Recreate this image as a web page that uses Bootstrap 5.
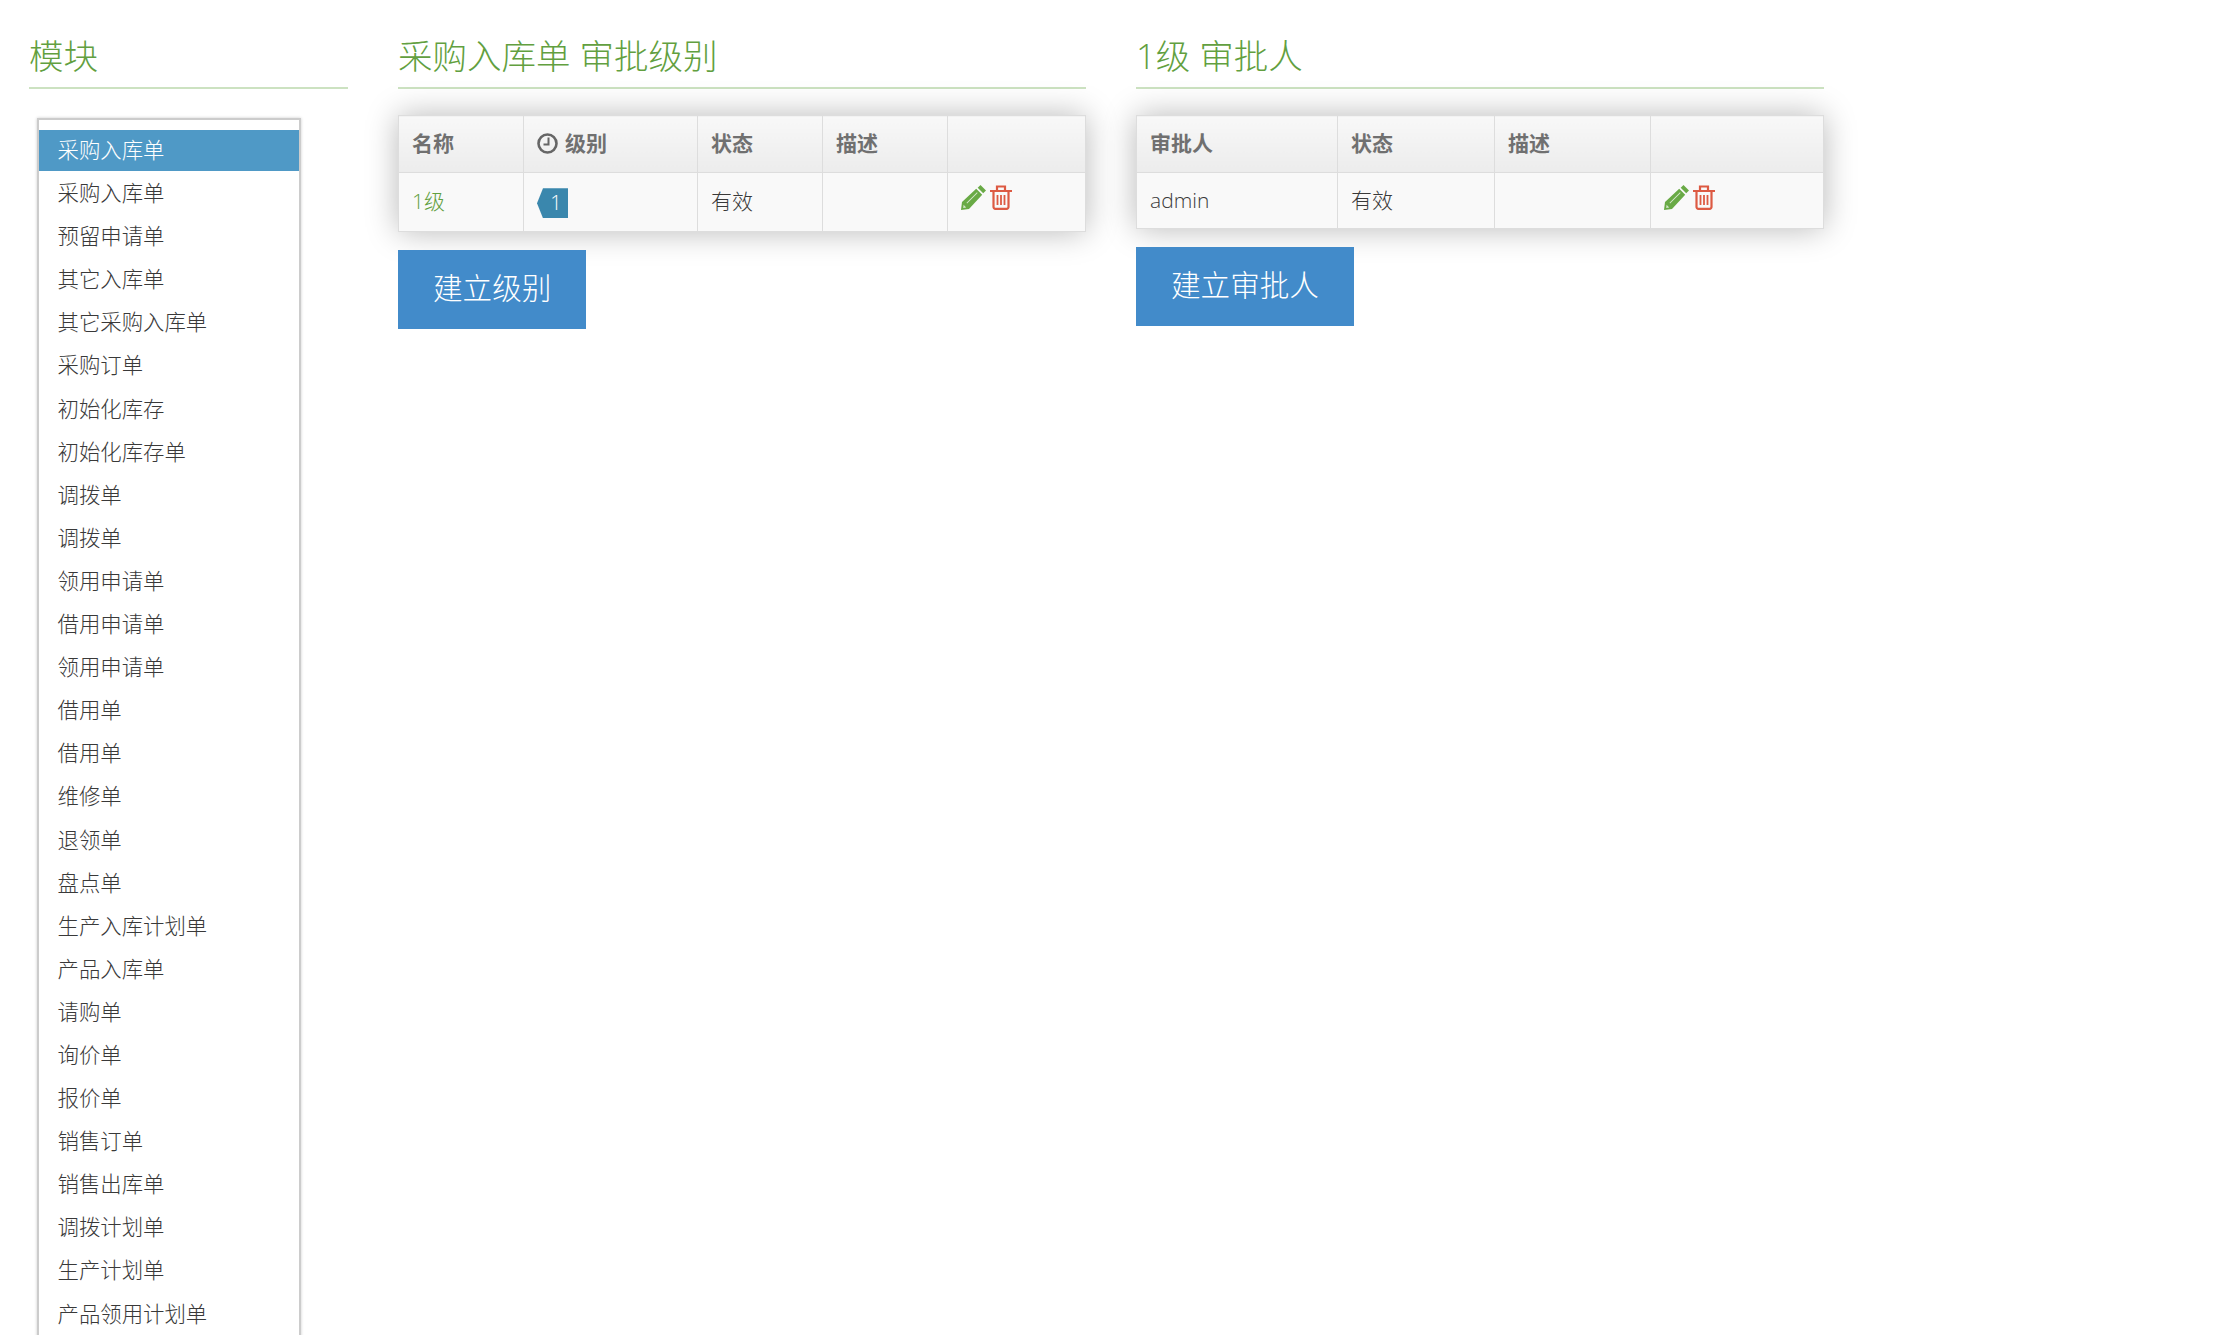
<!DOCTYPE html>
<html lang="zh-CN">
<head>
  <meta charset="UTF-8" />
  <title>审批级别</title>
  <link href="https://cdn.jsdelivr.net/npm/bootstrap@5.3.0/dist/css/bootstrap.min.css" rel="stylesheet" />
  <style>
    html, body { height: 100%; overflow: hidden; }
    body { font-family: "Open Sans", "Noto Sans CJK SC", sans-serif; font-weight: 300; color: #393939; background: #fff; }
    .page-wrap { gap: 50px; padding-left: 29px; }
    .col-modules { width: 319px; }
    .col-levels, .col-people { width: 688px; }
    .sec-title {
      height: 89px;
      margin: 0;
      padding-top: 33px;
      font-family: "Open Sans", "Noto Sans CJK SC", sans-serif;
      font-size: 34.5px;
      line-height: 46px;
      font-weight: 300;
      color: #629f40;
      border-bottom: 2px solid #cce2c1;
    }
    .module-box {
      width: 264px;
      margin: 29px 0 0 8px;
      padding: 10px 0 30px;
      border: 2px solid #ccc;
      border-radius: 0;
      box-shadow: 0 0 3px rgba(0, 0, 0, .2);
    }
    .module-box .list-group-item {
      height: 41px;
      margin-bottom: 2.1px;
      padding: 0 0 0 18.5px;
      border: 0;
      border-radius: 0;
      font-size: 21.4px;
      line-height: 39px;
      color: #393939;
    }
    .module-box .list-group-item.active { background: #4f99c6; color: #fff; }
    .grid-wrap { margin-top: 26px; box-shadow: 0 0 30px rgba(0, 0, 0, .28); }
    .grid-tbl { table-layout: fixed; margin: 0; font-size: 21px; }
    .grid-tbl > :not(caption) > * > * {
      padding: 0 13px;
      border: 1px solid #ddd;
      vertical-align: middle;
      color: #393939;
      background: #f9f9f9;
      box-shadow: none;
    }
    .grid-tbl thead th {
      height: 57px;
      font-weight: 700;
      color: #707070;
      background: linear-gradient(to bottom, #f8f8f8, #ececec);
    }
    .grid-tbl tbody td { height: 56px; }
    .grid-tbl .level-row td { height: 59px; }
    .w-name { width: 125px; }
    .w-mid { width: 174px; }
    .w-std { width: 125px; }
    .w-who { width: 201px; }
    .w-flag { width: 157px; }
    .w-note { width: 156px; }
    .grid-tbl .level-link { color: #629f40; text-decoration: none; }
    .clock-icon { width: 21px; height: 21px; margin-right: 7px; vertical-align: -3px; }
    .level-tag {
      display: inline-block;
      width: 31px;
      height: 30px;
      padding-left: 7px;
      font-size: 20px;
      line-height: 30px;
      text-align: center;
      color: #fff;
      background: #3a87ad;
      clip-path: polygon(6px 0, 100% 0, 100% 100%, 6px 100%, 0 50%);
      vertical-align: middle;
    }
    .row-actions { gap: 4px; margin-top: -6px; }
    .level-row .row-actions { margin-top: -9px; }
    .act-icon { display: block; height: 25px; }
    .act-pencil { width: 25px; }
    .act-trash { width: 22px; }
    .make-btn {
      margin-top: 18px;
      height: 79px;
      padding: 0 35px 3px;
      border: 0;
      border-radius: 0;
      font-size: 29.6px;
      font-weight: 300;
      color: #fff;
      background: #428bca;
    }
    .make-btn:hover { color: #fff; background: #428bca; }
  </style>
</head>
<body>
  <div class="d-flex align-items-start page-wrap">
    <div class="col-modules">
      <h4 class="sec-title">模块</h4>
      <div class="list-group module-box">
        <a class="list-group-item active">采购入库单</a>
        <a class="list-group-item">采购入库单</a>
        <a class="list-group-item">预留申请单</a>
        <a class="list-group-item">其它入库单</a>
        <a class="list-group-item">其它采购入库单</a>
        <a class="list-group-item">采购订单</a>
        <a class="list-group-item">初始化库存</a>
        <a class="list-group-item">初始化库存单</a>
        <a class="list-group-item">调拨单</a>
        <a class="list-group-item">调拨单</a>
        <a class="list-group-item">领用申请单</a>
        <a class="list-group-item">借用申请单</a>
        <a class="list-group-item">领用申请单</a>
        <a class="list-group-item">借用单</a>
        <a class="list-group-item">借用单</a>
        <a class="list-group-item">维修单</a>
        <a class="list-group-item">退领单</a>
        <a class="list-group-item">盘点单</a>
        <a class="list-group-item">生产入库计划单</a>
        <a class="list-group-item">产品入库单</a>
        <a class="list-group-item">请购单</a>
        <a class="list-group-item">询价单</a>
        <a class="list-group-item">报价单</a>
        <a class="list-group-item">销售订单</a>
        <a class="list-group-item">销售出库单</a>
        <a class="list-group-item">调拨计划单</a>
        <a class="list-group-item">生产计划单</a>
        <a class="list-group-item">产品领用计划单</a>
      </div>
    </div>

    <div class="col-levels">
      <h4 class="sec-title">采购入库单 审批级别</h4>
      <div class="grid-wrap">
        <table class="table table-bordered grid-tbl">
          <thead>
            <tr>
              <th class="w-name">名称</th>
              <th class="w-mid">
                <svg class="clock-icon" viewBox="0 0 21 21"><circle cx="10.5" cy="10.5" r="9" fill="none" stroke="#666" stroke-width="2.6"/><path d="M11.5 4.5v7H6.5" fill="none" stroke="#666" stroke-width="2"/></svg>级别
              </th>
              <th class="w-std">状态</th>
              <th class="w-std">描述</th>
              <th></th>
            </tr>
          </thead>
          <tbody>
            <tr class="level-row">
              <td><a class="level-link" href="#">1级</a></td>
              <td><span class="level-tag">1</span></td>
              <td>有效</td>
              <td></td>
              <td>
                <div class="d-flex row-actions">
                  <svg class="act-icon act-pencil" viewBox="0 0 25 25"><path fill="#69aa46" d="M19.500 0L25 5.500l-2.800 2.800-5.500-5.500zM15.200 3.800l6 6L8 24 0 25l1-8z"/><path fill="#d6e8cc" d="M2.600 19.800l2.600 2.600-3 .5zM5.500 17.800l10.500-10.500.6.600-10.500 10.500z"/></svg>
                  <svg class="act-icon act-trash" viewBox="0 0 22 25"><path fill="none" stroke="#dd5a43" stroke-width="2.2" d="M0 6h22M7 6V1.500h8V6M3.500 6v16a1.800 1.800 0 0 0 1.800 1.800h11.400a1.800 1.800 0 0 0 1.800-1.800V6"/><path fill="none" stroke="#dd5a43" stroke-width="1.800" d="M7.500 10v10M11 10v10M14.500 10v10"/></svg>
                </div>
              </td>
            </tr>
          </tbody>
        </table>
      </div>
      <button type="button" class="btn make-btn">建立级别</button>
    </div>

    <div class="col-people">
      <h4 class="sec-title">1级 审批人</h4>
      <div class="grid-wrap">
        <table class="table table-bordered grid-tbl">
          <thead>
            <tr>
              <th class="w-who">审批人</th>
              <th class="w-flag">状态</th>
              <th class="w-note">描述</th>
              <th></th>
            </tr>
          </thead>
          <tbody>
            <tr>
              <td>admin</td>
              <td>有效</td>
              <td></td>
              <td>
                <div class="d-flex row-actions">
                  <svg class="act-icon act-pencil" viewBox="0 0 25 25"><path fill="#69aa46" d="M19.500 0L25 5.500l-2.800 2.800-5.500-5.500zM15.200 3.800l6 6L8 24 0 25l1-8z"/><path fill="#d6e8cc" d="M2.600 19.800l2.600 2.600-3 .5zM5.500 17.800l10.500-10.500.6.600-10.500 10.500z"/></svg>
                  <svg class="act-icon act-trash" viewBox="0 0 22 25"><path fill="none" stroke="#dd5a43" stroke-width="2.2" d="M0 6h22M7 6V1.500h8V6M3.500 6v16a1.800 1.800 0 0 0 1.800 1.800h11.400a1.800 1.800 0 0 0 1.800-1.800V6"/><path fill="none" stroke="#dd5a43" stroke-width="1.800" d="M7.500 10v10M11 10v10M14.500 10v10"/></svg>
                </div>
              </td>
            </tr>
          </tbody>
        </table>
      </div>
      <button type="button" class="btn make-btn">建立审批人</button>
    </div>
  </div>
  <script src="https://cdn.jsdelivr.net/npm/bootstrap@5.3.0/dist/js/bootstrap.bundle.min.js"></script>
</body>
</html>
